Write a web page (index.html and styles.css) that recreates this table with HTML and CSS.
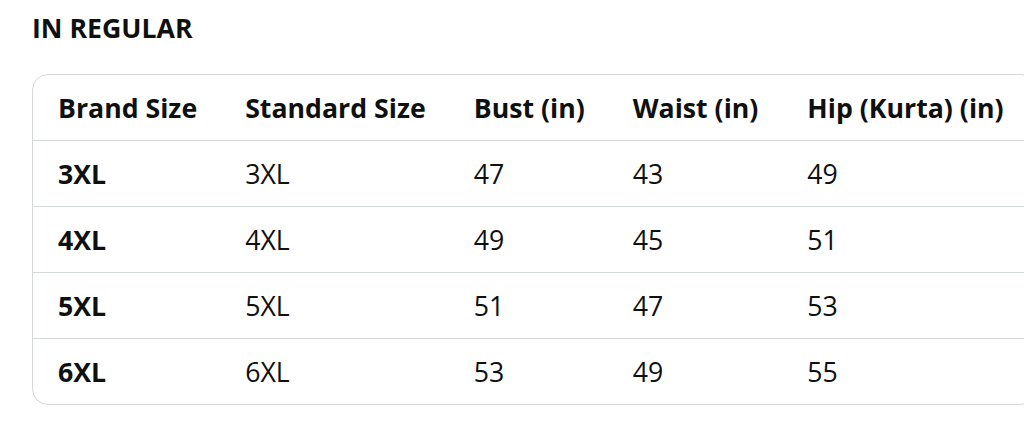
FILE: index.html
```html
<!DOCTYPE html>
<html>
<head>
<meta charset="utf-8">
<link rel="stylesheet" href="styles.css">
</head>
<body>
<div class="page">
  <h2 class="title">IN REGULAR</h2>
  <div class="table-wrap">
    <table class="size-table">
      <thead>
        <tr><th>Brand Size</th><th>Standard Size</th><th>Bust (in)</th><th>Waist (in)</th><th>Hip (Kurta) (in)</th></tr>
      </thead>
      <tbody>
        <tr><td class="brand">3XL</td><td>3XL</td><td>47</td><td>43</td><td>49</td></tr>
        <tr><td class="brand">4XL</td><td>4XL</td><td>49</td><td>45</td><td>51</td></tr>
        <tr><td class="brand">5XL</td><td>5XL</td><td>51</td><td>47</td><td>53</td></tr>
        <tr><td class="brand">6XL</td><td>6XL</td><td>53</td><td>49</td><td>55</td></tr>
      </tbody>
    </table>
  </div>
</div>
</body>
</html>
```
FILE: styles.css
```css
html, body {
  margin: 0;
  padding: 0;
  background: #ffffff;
}
.page {
  box-sizing: border-box;
  width: 1024px;
  height: 439px;
  overflow: hidden;
  padding: 11px 0 0 32px;
  font-family: "Open Sans", "Noto Sans", sans-serif;
  color: #0f1111;
}
.title {
  margin: 0 0 29px 0;
  font-size: 26.7px;
  font-weight: 700;
  line-height: 34px;
  white-space: nowrap;
}
.table-wrap {
  display: inline-block;
  border: 1px solid #d5d9d9;
  border-radius: 16px;
  overflow: hidden;
}
.size-table {
  border-collapse: collapse;
  font-size: 26.7px;
}
.size-table th,
.size-table td {
  text-align: left;
  padding: 0 24px;
  height: 65px;
  white-space: nowrap;
  font-weight: 400;
}
.size-table th:first-child,
.size-table td:first-child {
  padding-left: 25px;
}
.size-table th:last-child,
.size-table td:last-child {
  padding-left: 25px;
  padding-right: 32px;
}
.size-table th {
  font-weight: 700;
}
.size-table td.brand {
  font-weight: 700;
}
.size-table tbody tr td {
  border-top: 1px solid #d5d9d9;
}
```
